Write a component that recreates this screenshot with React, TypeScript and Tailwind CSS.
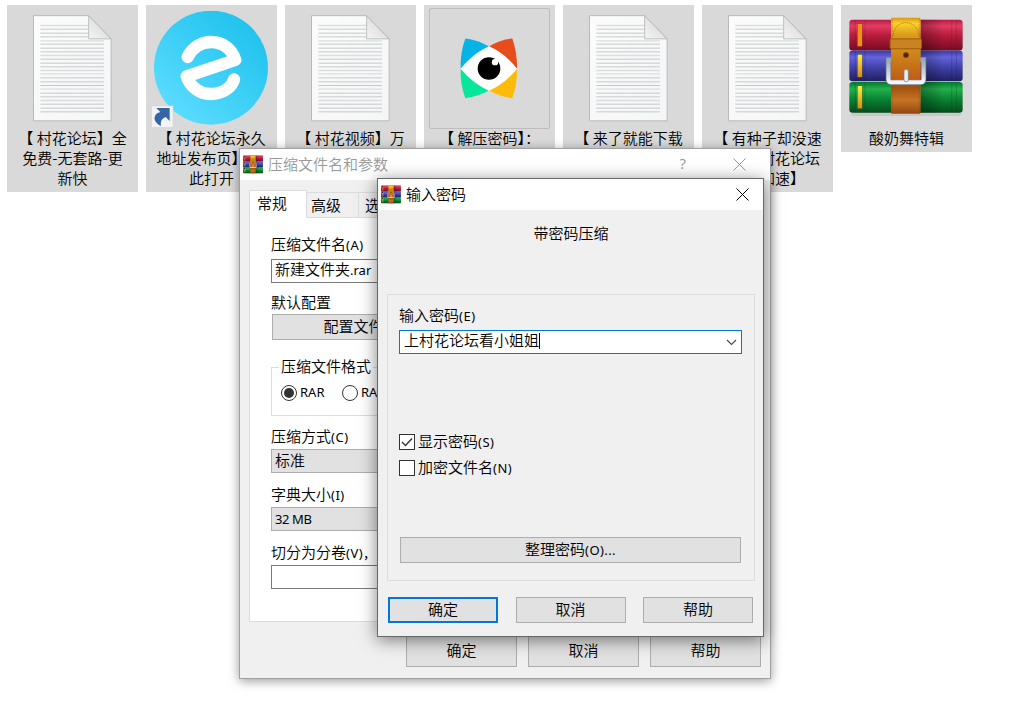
import React from "react";
import clsx from "clsx";

interface DesktopItem {
  id: string;
  lines: string[];
  icon: React.ReactNode;
  focused?: boolean;
}

const RULES = [
  75, 86, 98, 109, 121, 131, 143, 154, 165, 176, 188, 199, 210, 220, 232, 244,
  266, 255, 278, 289, 300, 311, 323, 334,
];
const SOFT_RULES = [75, 121, 165, 210, 220, 266, 300];

const TextFileIcon = () => (
  <svg viewBox="99 44 237 320" className="w-[79px] h-[107px]">
    <defs>
      <linearGradient id="paper" x1="0" y1="0" x2="1" y2="1">
        <stop offset="0" stopColor="#fbfcfb" />
        <stop offset="1" stopColor="#f3f5f7" />
      </linearGradient>
      <linearGradient id="fold" x1="0" y1="1" x2="1" y2="0">
        <stop offset="0" stopColor="#f4f4f4" />
        <stop offset="1" stopColor="#d2d2d2" />
      </linearGradient>
    </defs>
    <path
      d="M100.500 45.500H266L333.500 115V361H100.500Z"
      fill="url(#paper)"
      stroke="#b9b9b9"
      strokeWidth="3"
    />
    {RULES.map((y) => (
      <path
        key={y}
        d={`M121 ${y}H${y < 118 ? 266 : 312}`}
        stroke={SOFT_RULES.includes(y) ? "#dcdede" : "#c6c8c9"}
        strokeWidth={SOFT_RULES.includes(y) ? 4 : 3}
      />
    ))}
    <path d="M266 46V115H333Z" fill="url(#fold)" stroke="#b4b4b4" strokeWidth="2.500" />
  </svg>
);

const BrowserIcon = () => (
  <svg viewBox="453 33 354 351" className="w-[118px] h-[117px] mt-px -ml-[3px]">
    <defs>
      <linearGradient id="sky" x1="0.150" y1="0.900" x2="0.850" y2="0.100">
        <stop offset="0" stopColor="#5bdcff" />
        <stop offset="1" stopColor="#1fc2ed" />
      </linearGradient>
    </defs>
    <circle cx="633" cy="203" r="171" fill="url(#sky)" />
    <path
      d="M563 171C577 142 605 126 634 126C668 126 696 147 706 180L560 229C571 262 600 282 632 282C667 282 694 264 702 238"
      fill="none"
      stroke="#fff"
      strokeWidth="37"
      strokeLinecap="round"
      strokeLinejoin="round"
    />
    <rect x="455" y="318" width="64" height="64" fill="#f3f3f3" stroke="#d6d6d6" strokeWidth="2" />
    <path
      d="M469 324H509V363L497 351C485 356 481 363 483 378C470 372 462 362 464 351C466 342 474 338 481 336Z"
      fill="#3565a5"
    />
  </svg>
);

const EyeIcon = () => (
  <svg viewBox="538 110 180 188" className="w-[60px] h-[63px] -ml-px">
    <path d="M557 114Q595 118 628 138L543 205Q541 158 557 114Z" fill="#06b3e6" />
    <path d="M698 114Q661 118 628 138L712 205Q713 158 698 114Z" fill="#e64d1b" />
    <path d="M543 205L628 270Q597 287 557 293Q541 250 543 205Z" fill="#06e79c" />
    <path d="M712 205L628 270Q660 288 698 293Q713 250 712 205Z" fill="#fcbb08" />
    <path d="M543 205Q579 158 628 137Q677 158 712 205Q677 249 628 271Q579 249 543 205Z" fill="#fff" />
    <circle cx="628" cy="204" r="34" fill="#000" />
    <circle cx="646" cy="185" r="9.500" fill="#fff" />
    <circle cx="657" cy="176" r="8" fill="#fff" />
  </svg>
);

const BOOKS = [
  { y: 57, fill: "url(#red)", edge: "#7d1026" },
  { y: 150, fill: "url(#blue)", edge: "#1d1b5c" },
  { y: 245, fill: "url(#green)", edge: "#06401a" },
];

const RarIcon = ({ className }: { className: string }) => (
  <svg viewBox="56 49 344 302" preserveAspectRatio="none" className={className}>
    <defs>
      <linearGradient id="red" x2="0" y2="1">
        <stop offset="0" stopColor="#b81b42" />
        <stop offset="0.200" stopColor="#e23c64" />
        <stop offset="0.500" stopColor="#b91d3c" />
        <stop offset="1" stopColor="#760b21" />
      </linearGradient>
      <linearGradient id="blue" x2="0" y2="1">
        <stop offset="0" stopColor="#3c39a0" />
        <stop offset="0.220" stopColor="#6463dc" />
        <stop offset="0.550" stopColor="#4142a8" />
        <stop offset="1" stopColor="#201f63" />
      </linearGradient>
      <linearGradient id="green" x2="0" y2="1">
        <stop offset="0" stopColor="#08752c" />
        <stop offset="0.230" stopColor="#22b04c" />
        <stop offset="0.550" stopColor="#0b8433" />
        <stop offset="1" stopColor="#044c1a" />
      </linearGradient>
      <linearGradient id="gold" x2="0" y2="1">
        <stop offset="0" stopColor="#fff03a" />
        <stop offset="1" stopColor="#d98a12" />
      </linearGradient>
      <linearGradient id="belt" x2="0" y2="1">
        <stop offset="0" stopColor="#d9960f" />
        <stop offset="0.060" stopColor="#f8d22c" />
        <stop offset="0.180" stopColor="#dd9b1c" />
        <stop offset="0.420" stopColor="#c47a18" />
        <stop offset="0.620" stopColor="#cf6018" />
        <stop offset="0.720" stopColor="#a1500e" />
        <stop offset="0.860" stopColor="#c77425" />
        <stop offset="1" stopColor="#94450c" />
      </linearGradient>
      <linearGradient id="flap" x2="0" y2="1">
        <stop offset="0" stopColor="#d08c1e" />
        <stop offset="1" stopColor="#c05e14" />
      </linearGradient>
      <linearGradient id="shade">
        <stop offset="0" stopColor="#000" stopOpacity="0.300" />
        <stop offset="1" stopColor="#000" stopOpacity="0" />
      </linearGradient>
      <linearGradient id="steel" x2="0" y2="1">
        <stop offset="0" stopColor="#98a5b3" />
        <stop offset="1" stopColor="#f4f6f9" />
      </linearGradient>
    </defs>
    <rect x="62" y="335" width="332" height="13" rx="6" fill="#000" opacity="0.080" />
    {BOOKS.map((book, i) => (
      <g key={book.y}>
        <rect x="57" y={book.y} width="342" height="93" rx="10" fill={book.fill} />
        <path
          d={`M75 ${book.y + 1}V${book.y + 92}M104 ${book.y + 1}V${book.y + 92}M366 ${book.y + 1}V${book.y + 92}M380 ${book.y + 1}V${book.y + 92}`}
          stroke={book.edge}
          strokeWidth="2"
          opacity="0.400"
        />
        <rect x="272" y={book.y} width="70" height="93" fill="url(#shade)" />
        <rect
          x="81"
          y={book.y + 12}
          width="15"
          height="69"
          fill={i === 0 ? "#ee9218" : "url(#gold)"}
          stroke={book.edge}
          strokeWidth="1"
        />
      </g>
    ))}
    <rect x="183" y="51" width="89" height="290" rx="3" fill="url(#belt)" />
    <path d="M187 56V338M268 56V338" stroke="#8a430c" strokeWidth="2" strokeDasharray="4 3" opacity="0.600" />
    <path d="M189 108C192 52 263 52 268 108" fill="none" stroke="#a0650e" strokeWidth="2" strokeDasharray="4 2" />
    <path d="M184 178H175V237Q175 246 184 246H272Q281 246 281 237V178H271" fill="none" stroke="#72808e" strokeWidth="16" />
    <path d="M184 178H175V237Q175 246 184 246H272Q281 246 281 237V178H271" fill="none" stroke="url(#steel)" strokeWidth="12" />
    <path d="M184 145H271V228Q271 235 264 235H191Q184 235 184 228Z" fill="url(#flap)" />
    <rect x="180" y="115" width="95" height="30" rx="3" fill="#c98320" stroke="#9a5b0d" strokeWidth="3" />
    <circle cx="228" cy="164" r="8" fill="#4d2407" stroke="#8a4e12" strokeWidth="3" />
    <rect x="222" y="207" width="13" height="38" rx="6" fill="#e8eef5" stroke="#6e7884" strokeWidth="2" />
  </svg>
);

const desktopItems: DesktopItem[] = [
  { id: "forum", icon: <TextFileIcon />, lines: ["【 村花论坛】全", "免费-无套路-更", "新快"] },
  { id: "browser", icon: <BrowserIcon />, lines: ["【 村花论坛永久", "地址发布页】-由", "此打开"] },
  { id: "video", icon: <TextFileIcon />, lines: ["【 村花视频】万"] },
  { id: "password", icon: <EyeIcon />, lines: ["【 解压密码】："], focused: true },
  { id: "download", icon: <TextFileIcon />, lines: ["【 来了就能下载"] },
  { id: "speed", icon: <TextFileIcon />, lines: ["【 有种子却没速", "度上去村花论坛", "可以加速】"] },
  {
    id: "rar",
    icon: <RarIcon className="w-[114px] h-[100px] -mt-1 -ml-0.5" />,
    lines: ["酸奶舞特辑"],
  },
];

const Cross = ({ className = "" }) => (
  <svg viewBox="0 0 13 13" className={clsx("w-[13px] h-[13px]", className)}>
    <path d="M0.500 0.500L12.500 12.500M12.500 0.500L0.500 12.500" stroke="currentColor" strokeWidth="1" />
  </svg>
);

const Han = ({ children, className = "" }: { children: React.ReactNode; className?: string }) => (
  <span className={clsx("relative -top-px leading-5", className)}>{children}</span>
);

const Latin = ({ children, className = "" }: { children: React.ReactNode; className?: string }) => (
  <span
    className={clsx(
      "relative font-normal font-['Noto_Sans','Noto_Sans_CJK_SC',sans-serif] text-[13px]",
      className
    )}
  >
    {children}
  </span>
);

// Chinese caption followed by its accelerator in the smaller latin face
const Label = ({ text, hint, className = "" }: { text: string; hint?: string; className?: string }) => (
  <div className={clsx("flex items-center h-5 leading-5 whitespace-pre", className)}>
    <Han>{text}</Han>
    {hint && <Latin className="tracking-[0.5px]">{hint}</Latin>}
  </div>
);

const Button = ({ children, className = "" }: { children: React.ReactNode; className?: string }) => (
  <button
    className={clsx(
      "flex items-center justify-center bg-[#e1e1e1] leading-5 whitespace-pre",
      className
    )}
  >
    {children}
  </button>
);

const Check = ({ text, hint, checked }: { text: string; hint: string; checked?: boolean }) => (
  <div className="flex items-center h-[26px] gap-[3px]">
    <span className="w-4 h-4 border border-[#333] bg-white">
      {checked && (
        <svg viewBox="0 0 14 14" className="w-3.5 h-3.5">
          <path d="M2 7L5.500 10.500L12 3.500" fill="none" stroke="#333" strokeWidth="1.400" />
        </svg>
      )}
    </span>
    <Label text={text} hint={hint} />
  </div>
);

const Radio = ({ text, checked }: { text: string; checked?: boolean }) => (
  <div className="flex items-center w-[61px] gap-[3px] shrink-0">
    <span className="flex items-center justify-center w-4 h-4 rounded-full border border-[#333] bg-white shrink-0">
      {checked && <span className="w-2.5 h-2.5 rounded-full bg-[#333]" />}
    </span>
    <Latin>{text}</Latin>
  </div>
);

const ArchiveDialog = () => (
  <div className="absolute left-[239px] top-[148px] w-[532px] h-[531px] flex flex-col bg-[#f0f0f0] border border-[#a0a0a0] shadow-[0_2px_10px_rgba(0,0,0,0.4)]">
    <div className="flex items-center h-[31px] bg-white pl-[3px] pr-[24px] text-[#999] shrink-0">
      <RarIcon className="w-[20px] h-[19px]" />
      <Han className="ml-[5px]">压缩文件名和参数</Han>
      <span className="relative -top-px ml-auto mr-[47px] font-normal font-['Open_Sans',sans-serif]">?</span>
      <Cross />
    </div>
    <div className="flex items-end h-[38px] pl-[9px] shrink-0">
      <div className="relative z-10 w-[58px] h-[28px] pl-[7px] pt-[2px] bg-white border border-b-0 border-[#dcdcdc] leading-5">
        常规
      </div>
      <div className="w-[52px] h-[26px] pl-1 pt-[2px] border-t border-r border-[#dcdcdc] leading-5">
        高级
      </div>
      <div className="w-[52px] h-[26px] pl-[6px] pt-[2px] border-t border-r border-[#dcdcdc] leading-5">
        选项
      </div>
    </div>
    <div className="ml-[9px] w-[513px] h-[405px] -mt-px pl-[21px] pr-5 pt-[17px] bg-white border border-[#dcdcdc] shrink-0">
      <Label text="压缩文件名" hint="(A)" />
      <div className="flex items-center h-6 mt-1 pl-[3px] pb-0.5 border border-[#7a7a7a] bg-white">
        <Han>新建文件夹</Han>
        <Latin className="top-px">.rar</Latin>
      </div>
      <Label text="默认配置" className="mt-[10px]" />
      <Button className="w-[175px] h-[26px] mt-px ml-px border border-[#adadad]">
        <Han>配置文件...</Han>
      </Button>
      <div className="relative h-[49px] mt-[27px] border border-[#dcdcdc]">
        <span className="absolute left-[7px] -top-[12px] px-0.5 bg-white leading-5">压缩文件格式</span>
        <div className="flex pl-[9px] pt-[15px]">
          <Radio text="RAR" checked />
          <Radio text="RAR4" />
        </div>
      </div>
      <Label text="压缩方式" hint="(C)" className="mt-[11px]" />
      <div className="flex items-center h-6 mt-[2px] pl-[3px] pb-0.5 border border-[#adadad] bg-[#e1e1e1]">
        标准
      </div>
      <Label text="字典大小" hint="(I)" className="mt-[12px]" />
      <div className="flex items-center h-6 mt-[2px] pl-[3px] border border-[#adadad] bg-[#e1e1e1]">
        <Latin className="top-px tracking-[-0.4px]">32 MB</Latin>
      </div>
      <Label text="切分为分卷" hint="(V)，" className="mt-[12px]" />
      <div className="h-6 mt-[2px] border border-[#7a7a7a] bg-white" />
    </div>
    <div className="flex gap-[11px] pl-[166px] pt-[12px]">
      {["确定", "取消", "帮助"].map((text) => (
        <Button key={text} className="w-[111px] h-[33px] border border-[#adadad]">
          <Han>{text}</Han>
        </Button>
      ))}
    </div>
  </div>
);

const PasswordDialog = () => (
  <div className="absolute left-[377px] top-[178px] w-[387px] h-[459px] flex flex-col bg-[#f0f0f0] border border-[#686868] shadow-[0_3px_16px_rgba(0,0,0,0.5)]">
    <div className="flex items-center h-[31px] bg-white pl-[3px] pr-[14px] shrink-0">
      <RarIcon className="w-[20px] h-[19px]" />
      <Han className="ml-[5px]">输入密码</Han>
      <Cross className="ml-auto" />
    </div>
    <div className="h-[84px] pt-[13px] pl-px text-center leading-5 shrink-0">带密码压缩</div>
    <div className="mx-[9px] w-[368px] h-[287px] px-[11px] pt-[11px] border border-[#dcdcdc] shrink-0">
      <Label text="输入密码" hint="(E)" />
      <div className="flex items-center w-[343px] h-6 mt-1 pl-1 pr-1 border border-[#0078d7] bg-white">
        <Han className="-mt-0.5">上村花论坛看小姐姐</Han>
        <span className="w-px h-4 -mt-0.5 bg-black" />
        <svg viewBox="0 0 11 7" className="w-[11px] h-[7px] ml-auto">
          <path d="M1 1L5.500 5.500L10 1" fill="none" stroke="#444" strokeWidth="1.100" />
        </svg>
      </div>
      <div className="mt-[75px]">
        <Check text="显示密码" hint="(S)" checked />
        <Check text="加密文件名" hint="(N)" />
      </div>
      <Button className="w-[341px] h-[26px] ml-px mt-[56px] border border-[#adadad]">
        <Han>整理密码</Han>
        <Latin className="tracking-[0.4px]">(O)...</Latin>
      </Button>
    </div>
    <div className="flex justify-between pl-[10px] pr-[10px] pt-4">
      <Button className="w-[110px] h-[26px] border-2 border-[#0078d7]">
        <Han>确定</Han>
      </Button>
      <Button className="w-[110px] h-[26px] border border-[#adadad]">
        <Han>取消</Han>
      </Button>
      <Button className="w-[110px] h-[26px] border border-[#adadad]">
        <Han>帮助</Han>
      </Button>
    </div>
  </div>
);

export default function App() {
  return (
    <div className="relative w-[1026px] h-[705px] overflow-hidden bg-white text-black text-[15px] font-[350] font-['Noto_Sans_CJK_SC',sans-serif]">
      <div className="flex items-start gap-2 pl-[7px] pt-[5px]">
        {desktopItems.map((item) => (
          <div key={item.id} className="w-[131px] pt-[3px] pb-1 bg-[#d9d9d9]">
            <div
              className={clsx(
                "flex items-center justify-center w-[121px] h-[121px] mx-auto",
                item.focused && "border border-[#bdbdbd] rounded-xs"
              )}
            >
              {item.icon}
            </div>
            <div className="flex flex-col items-center -mt-px whitespace-pre">
              {item.lines.map((line) => (
                <span key={line} className="h-5 leading-5">
                  {line}
                </span>
              ))}
            </div>
          </div>
        ))}
      </div>
      <ArchiveDialog />
      <PasswordDialog />
    </div>
  );
}
